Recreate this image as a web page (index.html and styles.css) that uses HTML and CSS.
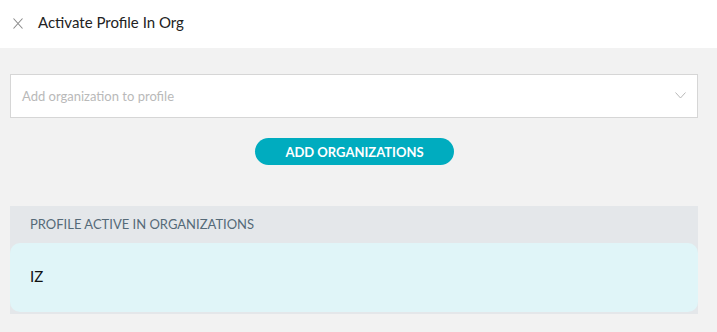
FILE: index.html
```html
<!DOCTYPE html>
<html>
<head>
<meta charset="utf-8">
<link rel="stylesheet" href="styles.css">
</head>
<body>
<div class="header">
  <svg class="close" width="10" height="11" viewBox="0 0 10 11"><path d="M0.5 0.5 L9.5 10.5 M9.5 0.5 L0.5 10.5" stroke="#8a8a8a" stroke-width="1.1" fill="none"/></svg>
  <span class="title">Activate Profile In Org</span>
</div>
<div class="content">
  <div class="select">
    <span class="placeholder">Add organization to profile</span>
    <svg class="chev" width="11" height="7" viewBox="0 0 11 7"><path d="M0.5 0.5 L5.5 6 L10.5 0.5" stroke="#b8b8b8" stroke-width="1" fill="none"/></svg>
  </div>
  <div class="btnrow"><button class="btn">ADD ORGANIZATIONS</button></div>
  <div class="section">
    <div class="section-head">PROFILE ACTIVE IN ORGANIZATIONS</div>
    <div class="item">IZ</div>
  </div>
</div>
</body>
</html>
```
FILE: styles.css
```css
html, body {
  margin: 0;
  padding: 0;
  background: #f2f2f2;
  font-family: Lato, "Open Sans", sans-serif;
}
.header {
  height: 48px;
  background: #ffffff;
  display: flex;
  align-items: center;
  padding-left: 13px;
  box-sizing: border-box;
}
.close {
  display: block;
  margin-top: -2px;
}
.title {
  margin-left: 15px;
  font-size: 15px;
  color: #222;
  margin-top: -5px;
}
.content {
  padding: 26px 19px 0 10px;
}
.select {
  height: 44px;
  box-sizing: border-box;
  border: 1px solid #d6d6d6;
  background: #fff;
  display: flex;
  align-items: center;
  justify-content: space-between;
  padding: 0 11px 0 11px;
}
.placeholder {
  font-size: 13px;
  color: #b9b9b9;
}
.chev {
  display: block;
  margin-top: -2px;
}
.btnrow {
  display: flex;
  justify-content: center;
  margin-top: 20px;
}
.btn {
  width: 199px;
  height: 27px;
  border: none;
  border-radius: 14px;
  background: #00acbf;
  color: #fff;
  font-family: Lato, sans-serif;
  font-weight: 700;
  font-size: 13px;
  padding: 0;
  margin-left: 1px;
}
.section {
  margin-top: 41px;
  background: #e4e7ea;
  padding-bottom: 2px;
}
.section-head {
  height: 37px;
  line-height: 37px;
  padding-left: 20px;
  font-size: 13px;
  color: #556a78;
}
.item {
  background: #e0f5f8;
  border-radius: 10px;
  height: 69px;
  line-height: 66px;
  padding-left: 20px;
  font-size: 15px;
  color: #111;
}
```
